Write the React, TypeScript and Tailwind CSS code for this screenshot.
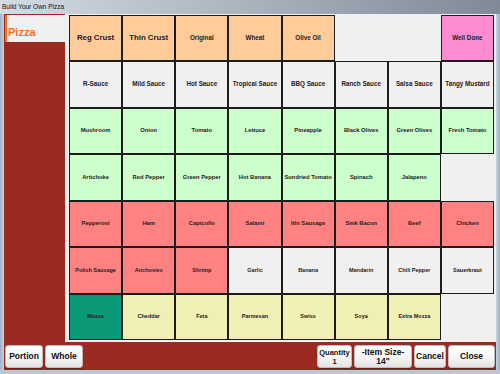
type Cell = { label: string; bg: string; size: string; span?: number } | null;

const PEACH = "bg-[#ffcc99]";
const GRAY = "bg-[#f0f0f0]";
const GREEN = "bg-[#ccffcc]";
const RED = "bg-[#ff8282]";
const YELLOW = "bg-[#f0f0b4]";

const rows: Cell[][] = [
  [
    { label: "Reg Crust", bg: PEACH, size: "text-[7.8px]" },
    { label: "Thin Crust", bg: PEACH, size: "text-[7.8px]" },
    { label: "Original", bg: PEACH, size: "text-[6.3px]" },
    { label: "Wheat", bg: PEACH, size: "text-[6.3px]" },
    { label: "Olive Oil", bg: PEACH, size: "text-[6.3px]" },
    null,
    null,
    { label: "Well Done", bg: "bg-[#ff8cd0]", size: "text-[6.3px]" },
  ],
  [
    { label: "R-Sauce", bg: GRAY, size: "text-[6.3px]" },
    { label: "Mild Sauce", bg: GRAY, size: "text-[6.3px]" },
    { label: "Hot Sauce", bg: GRAY, size: "text-[6.3px]" },
    { label: "Tropical Sauce", bg: GRAY, size: "text-[6.3px]" },
    { label: "BBQ Sauce", bg: GRAY, size: "text-[6.3px]" },
    { label: "Ranch Sauce", bg: GRAY, size: "text-[6.3px]" },
    { label: "Salsa Sauce", bg: GRAY, size: "text-[6.3px]" },
    { label: "Tangy Mustard", bg: GRAY, size: "text-[6.3px]" },
  ],
  [
    { label: "Mushroom", bg: GREEN, size: "text-[5.8px]" },
    { label: "Onion", bg: GREEN, size: "text-[5.8px]" },
    { label: "Tomato", bg: GREEN, size: "text-[5.8px]" },
    { label: "Lettuce", bg: GREEN, size: "text-[5.8px]" },
    { label: "Pineapple", bg: GREEN, size: "text-[5.8px]" },
    { label: "Black Olives", bg: GREEN, size: "text-[5.8px]" },
    { label: "Green Olives", bg: GREEN, size: "text-[5.8px]" },
    { label: "Fresh Tomato", bg: GREEN, size: "text-[5.8px]" },
  ],
  [
    { label: "Artichoke", bg: GREEN, size: "text-[5.8px]" },
    { label: "Red Pepper", bg: GREEN, size: "text-[5.8px]" },
    { label: "Green Pepper", bg: GREEN, size: "text-[5.8px]" },
    { label: "Hot Banana", bg: GREEN, size: "text-[5.8px]" },
    { label: "Sundried Tomato", bg: GREEN, size: "text-[5.8px]" },
    { label: "Spinach", bg: GREEN, size: "text-[5.8px]" },
    { label: "Jalapeno", bg: GREEN, size: "text-[5.8px]" },
    null,
  ],
  [
    { label: "Pepperoni", bg: RED, size: "text-[5.8px]" },
    { label: "Ham", bg: RED, size: "text-[5.8px]" },
    { label: "Capicollo", bg: RED, size: "text-[5.8px]" },
    { label: "Salami", bg: RED, size: "text-[5.8px]" },
    { label: "Itln Sausage", bg: RED, size: "text-[5.8px]" },
    { label: "Smk Bacon", bg: RED, size: "text-[5.8px]" },
    { label: "Beef", bg: RED, size: "text-[5.8px]" },
    { label: "Chicken", bg: RED, size: "text-[5.8px]" },
  ],
  [
    { label: "Polish Sausage", bg: RED, size: "text-[5.5px]" },
    { label: "Anchovies", bg: RED, size: "text-[5.5px]" },
    { label: "Shrimp", bg: RED, size: "text-[5.5px]" },
    { label: "Garlic", bg: GRAY, size: "text-[5.5px]" },
    { label: "Banana", bg: GRAY, size: "text-[5.5px]" },
    { label: "Mandarin", bg: GRAY, size: "text-[5.5px]" },
    { label: "Chili Pepper", bg: GRAY, size: "text-[5.5px]" },
    { label: "Sauerkraut", bg: GRAY, size: "text-[5.5px]" },
  ],
  [
    { label: "Mozza", bg: "bg-[#0a9a78]", size: "text-[5.5px]" },
    { label: "Cheddar", bg: YELLOW, size: "text-[5.5px]" },
    { label: "Feta", bg: YELLOW, size: "text-[5.5px]" },
    { label: "Parmesan", bg: YELLOW, size: "text-[5.5px]" },
    { label: "Swiss", bg: YELLOW, size: "text-[5.5px]" },
    { label: "Soya", bg: YELLOW, size: "text-[5.5px]" },
    { label: "Extra Mozza", bg: YELLOW, size: "text-[5.5px]" },
    null,
  ],
];

function Btn({ w, children }: { w: string; children: React.ReactNode }) {
  return (
    <button
      className={`${w} h-[23px] rounded-[3px] border border-[#bdbdbd] bg-gradient-to-b from-white via-[#f7f7f7] to-[#e2e2e2] text-[8.5px] font-bold leading-[9px] text-[#111] shadow-[0_1px_1px_rgba(0,0,0,0.35)] flex flex-col items-center justify-center`}
    >
      {children}
    </button>
  );
}

export default function App() {
  return (
    <div className="w-[500px] h-[374px] flex flex-col overflow-hidden bg-[#b9c7d6] font-['Liberation_Sans',Arial,sans-serif]">
      {/* title bar */}
      <div className="h-[14px] shrink-0 flex items-center pl-[2px] bg-gradient-to-r from-[#d3dbe3] via-[#a9b3be] to-[#7f8a96]">
        <span className="text-[6.5px] text-[#111]">Build Your Own Pizza</span>
      </div>
      <div className="flex flex-1 min-h-0">
        <div className="w-[4px] bg-gradient-to-r from-[#9fb1c4] to-[#c6d3e0]" />
        <div className="flex-1 flex flex-col bg-[#9c2a20]">
          <div className="flex h-[328px]">
            <div className="w-[61px] pt-[1px] pl-[1px]">
              <div className="h-[27px] bg-[#f0f0f0] border-l-2 border-[#ff6a1a] pl-[1px] pt-[4px]">
                <span className="text-[11px] font-bold text-[#ff6a1a]">Pizza</span>
              </div>
            </div>
            <div className="flex-1 bg-[#f0f0f0] pl-[4px] pt-[1px]">
              <div className="grid grid-cols-8 grid-rows-7 w-[425px] h-[325px]">
                {rows.flatMap((row, r) =>
                  row.map((c, i) =>
                    c ? (
                      <div
                        key={`${r}-${i}`}
                        className={`${c.bg} border border-[#1c1c1c] flex items-center justify-center text-center font-bold text-[#1e1a22] leading-none ${c.size}`}
                      >
                        {c.label}
                      </div>
                    ) : (
                      <div key={`${r}-${i}`} />
                    )
                  )
                )}
              </div>
            </div>
          </div>
          <div className="flex-1 flex items-center px-[1px] pt-[1px]">
            <div className="flex gap-[2px]">
              <Btn w="w-[38px]">Portion</Btn>
              <Btn w="w-[38px]">Whole</Btn>
            </div>
            <div className="ml-auto flex gap-[2px]">
              <Btn w="w-[35px]">
                <span className="text-[7.5px]">Quantity</span>
                <span className="text-[7.5px]">1</span>
              </Btn>
              <Btn w="w-[58px]">
                <span>-Item Size-</span>
                <span>14"</span>
              </Btn>
              <Btn w="w-[32px]">Cancel</Btn>
              <Btn w="w-[47px]">Close</Btn>
            </div>
          </div>
        </div>
        <div className="w-[4px] bg-gradient-to-r from-[#c6d3e0] to-[#9fb1c4]" />
      </div>
      <div className="h-[4px] shrink-0 bg-[#b9c7d6]" />
    </div>
  );
}
